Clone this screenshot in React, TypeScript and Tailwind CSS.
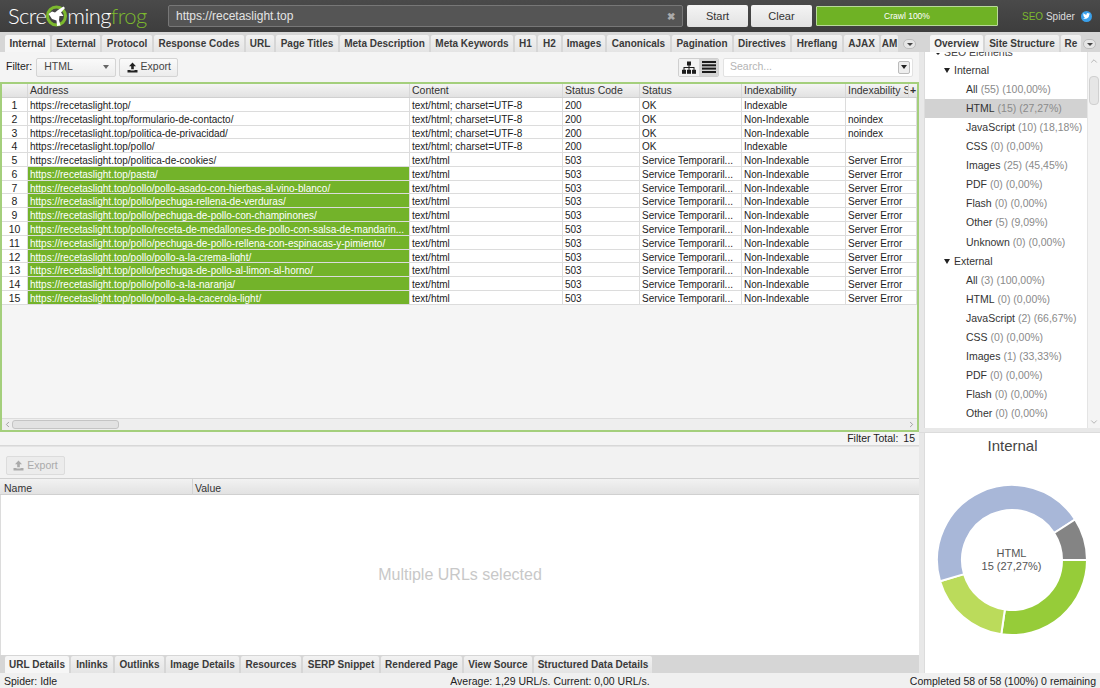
import { ChevronDown, ChevronLeft, ChevronRight, ChevronUp } from 'lucide-react';

const font = 'font-["Liberation_Sans",Arial,sans-serif]';

const topTabs = [
  { name: 'Internal', w: 'w-[45px]', active: true },
  { name: 'External', w: 'w-[48px]' },
  { name: 'Protocol', w: 'w-[50px]' },
  { name: 'Response Codes', w: 'w-[90px]' },
  { name: 'URL', w: 'w-[28px]' },
  { name: 'Page Titles', w: 'w-[62px]' },
  { name: 'Meta Description', w: 'w-[89px]' },
  { name: 'Meta Keywords', w: 'w-[82px]' },
  { name: 'H1', w: 'w-[21px]' },
  { name: 'H2', w: 'w-[23px]' },
  { name: 'Images', w: 'w-[42px]' },
  { name: 'Canonicals', w: 'w-[63px]' },
  { name: 'Pagination', w: 'w-[60px]' },
  { name: 'Directives', w: 'w-[56px]' },
  { name: 'Hreflang', w: 'w-[50px]' },
  { name: 'AJAX', w: 'w-[35px]' },
];

const bottomTabs = [
  { name: 'URL Details', w: 'w-[64px]', active: true },
  { name: 'Inlinks', w: 'w-[42px]' },
  { name: 'Outlinks', w: 'w-[49px]' },
  { name: 'Image Details', w: 'w-[73px]' },
  { name: 'Resources', w: 'w-[60px]' },
  { name: 'SERP Snippet', w: 'w-[76px]' },
  { name: 'Rendered Page', w: 'w-[81px]' },
  { name: 'View Source', w: 'w-[68px]' },
  { name: 'Structured Data Details', w: 'w-[118px]' },
];

const rows = [
  ['https://recetaslight.top/', 'text/html; charset=UTF-8', '200', 'OK', 'Indexable', ''],
  ['https://recetaslight.top/formulario-de-contacto/', 'text/html; charset=UTF-8', '200', 'OK', 'Non-Indexable', 'noindex'],
  ['https://recetaslight.top/politica-de-privacidad/', 'text/html; charset=UTF-8', '200', 'OK', 'Non-Indexable', 'noindex'],
  ['https://recetaslight.top/pollo/', 'text/html; charset=UTF-8', '200', 'OK', 'Indexable', ''],
  ['https://recetaslight.top/politica-de-cookies/', 'text/html', '503', 'Service Temporaril...', 'Non-Indexable', 'Server Error'],
  ['https://recetaslight.top/pasta/', 'text/html', '503', 'Service Temporaril...', 'Non-Indexable', 'Server Error'],
  ['https://recetaslight.top/pollo/pollo-asado-con-hierbas-al-vino-blanco/', 'text/html', '503', 'Service Temporaril...', 'Non-Indexable', 'Server Error'],
  ['https://recetaslight.top/pollo/pechuga-rellena-de-verduras/', 'text/html', '503', 'Service Temporaril...', 'Non-Indexable', 'Server Error'],
  ['https://recetaslight.top/pollo/pechuga-de-pollo-con-champinones/', 'text/html', '503', 'Service Temporaril...', 'Non-Indexable', 'Server Error'],
  ['https://recetaslight.top/pollo/receta-de-medallones-de-pollo-con-salsa-de-mandarin...', 'text/html', '503', 'Service Temporaril...', 'Non-Indexable', 'Server Error'],
  ['https://recetaslight.top/pollo/pechuga-de-pollo-rellena-con-espinacas-y-pimiento/', 'text/html', '503', 'Service Temporaril...', 'Non-Indexable', 'Server Error'],
  ['https://recetaslight.top/pollo/pollo-a-la-crema-light/', 'text/html', '503', 'Service Temporaril...', 'Non-Indexable', 'Server Error'],
  ['https://recetaslight.top/pollo/pechuga-de-pollo-al-limon-al-horno/', 'text/html', '503', 'Service Temporaril...', 'Non-Indexable', 'Server Error'],
  ['https://recetaslight.top/pollo/pollo-a-la-naranja/', 'text/html', '503', 'Service Temporaril...', 'Non-Indexable', 'Server Error'],
  ['https://recetaslight.top/pollo/pollo-a-la-cacerola-light/', 'text/html', '503', 'Service Temporaril...', 'Non-Indexable', 'Server Error'],
];

const gridCols = 'grid grid-cols-[26px_382px_153px_77px_102px_104px_71px]';

const tree = [
  { group: 'Internal', items: [
    ['All', '(55) (100,00%)'], ['HTML', '(15) (27,27%)'], ['JavaScript', '(10) (18,18%)'], ['CSS', '(0) (0,00%)'],
    ['Images', '(25) (45,45%)'], ['PDF', '(0) (0,00%)'], ['Flash', '(0) (0,00%)'], ['Other', '(5) (9,09%)'], ['Unknown', '(0) (0,00%)'],
  ] },
  { group: 'External', items: [
    ['All', '(3) (100,00%)'], ['HTML', '(0) (0,00%)'], ['JavaScript', '(2) (66,67%)'], ['CSS', '(0) (0,00%)'],
    ['Images', '(1) (33,33%)'], ['PDF', '(0) (0,00%)'], ['Flash', '(0) (0,00%)'], ['Other', '(0) (0,00%)'],
  ] },
];

function Tab({ name, w, active }: { name: string; w: string; active?: boolean }) {
  return (
    <div className={`${w} shrink-0 mr-[2px] h-full flex items-center justify-center rounded-t-[2px] whitespace-nowrap overflow-hidden text-[10px] font-bold text-[#3a3a3a] ${active ? 'bg-[#f6f6f6]' : 'bg-gradient-to-b from-[#f2f2f2] to-[#e4e4e4]'}`}>
      {name}
    </div>
  );
}

function MoreButton() {
  return (
    <div className="w-[13px] h-[10px] rounded-full bg-[#e6e6e6] border border-[#bcbcbc] flex items-center justify-center">
      <div className="w-0 h-0 border-x-[3px] border-x-transparent border-t-[3px] border-t-[#444]" />
    </div>
  );
}

function ExportIcon({ color }: { color: string }) {
  return (
    <svg width="11" height="11" viewBox="0 0 11 11" fill={color}>
      <path d="M5.5 0.5 L9 4.2 H6.8 V7.2 H4.2 V4.2 H2 Z" />
      <path d="M0.5 8 H3.5 V8.6 H7.5 V8 H10.5 V10.5 H0.5 Z" />
    </svg>
  );
}

function TreeIcon() {
  return (
    <svg width="14" height="13" viewBox="0 0 14 13" fill="#1c1c1c">
      <rect x="5" y="0.5" width="4" height="4" />
      <path d="M6.5 4 H7.5 V6 H12.5 V9 H11.5 V7 H7.5 V9 H6.5 V7 H2.5 V9 H1.5 V6 H6.5 Z" />
      <rect x="0" y="8.8" width="4" height="4" />
      <rect x="5" y="8.8" width="4" height="4" />
      <rect x="10" y="8.8" width="4" height="4" />
    </svg>
  );
}

function ListIcon() {
  return (
    <svg width="14" height="12" viewBox="0 0 14 12" fill="#1c1c1c">
      <rect x="0" y="0" width="14" height="2" />
      <rect x="0" y="3.3" width="14" height="2" />
      <rect x="0" y="6.6" width="14" height="2" />
      <rect x="0" y="10" width="14" height="2" />
    </svg>
  );
}

function FrogMark() {
  return (
    <svg width="23" height="26" viewBox="0 0 23 26" className="shrink-0 mx-[-1px]">
      <circle cx="11.5" cy="13" r="9" fill="none" stroke="#7cb92e" strokeWidth="3" />
      <path d="M3.5 11 L7 8.5 L10 9.5 L13 7 L18.5 3.5 L20 5 L16 9.5 L18.5 13 L14.5 13 L14 17 L15.5 22.5 L12 23 L11.5 17.5 L7 16 L5 13 Z" fill="#ffffff" />
    </svg>
  );
}

function Donut() {
  const cx = 80;
  const cy = 80;
  const R = 75;
  const r = 50;
  const segs = [
    { from: 0, to: 98.2, fill: '#96cc39' },
    { from: 98.2, to: 163.6, fill: '#bbdb5b' },
    { from: 163.6, to: 327.3, fill: '#a8b7d8' },
    { from: 327.3, to: 360, fill: '#848484' },
  ];
  const pt = (rad: number, deg: number) => {
    const a = (deg * Math.PI) / 180;
    return `${(cx + rad * Math.cos(a)).toFixed(2)} ${(cy + rad * Math.sin(a)).toFixed(2)}`;
  };
  return (
    <svg width="160" height="160" viewBox="0 0 160 160" className="block">
      {segs.map((s) => (
        <path
          key={s.from}
          d={`M ${pt(R, s.from)} A ${R} ${R} 0 ${s.to - s.from > 180 ? 1 : 0} 1 ${pt(R, s.to)} L ${pt(r, s.to)} A ${r} ${r} 0 ${s.to - s.from > 180 ? 1 : 0} 0 ${pt(r, s.from)} Z`}
          fill={s.fill}
          stroke="#ffffff"
          strokeWidth="2"
        />
      ))}
    </svg>
  );
}

export default function App() {
  return (
    <div className={`${font} w-[1100px] h-[688px] overflow-hidden flex flex-col bg-[#ececec] text-[#1c1c1c] text-[10.5px]`}>
      {/* Top bar */}
      <header className="h-[32px] shrink-0 flex items-center bg-gradient-to-b from-[#4a4a4a] to-[#3d3d3d]">
        <div className="w-[168px] pl-[8px] flex items-center text-[22px] leading-none font-['Lato',sans-serif] font-light tracking-[-0.6px] text-white">
          Scre
          <FrogMark />
          ming<span className="text-[#7cb92e]">frog</span>
        </div>
        <div className="w-[515px] h-[22px] flex items-center justify-between px-[7px] rounded-[2px] border border-[#777] bg-[#555] text-[#e4e4e4] text-[12px]">
          <span>https://recetaslight.top</span>
          <span className="text-[#aaa] text-[10px] font-bold">✖</span>
        </div>
        <button className="ml-[4px] w-[61px] h-[22px] rounded-[2px] bg-gradient-to-b from-[#f4f4f4] to-[#e2e2e2] text-[#333] text-[11px]">Start</button>
        <button className="ml-[3px] w-[61px] h-[22px] rounded-[2px] bg-gradient-to-b from-[#f4f4f4] to-[#e2e2e2] text-[#333] text-[11px]">Clear</button>
        <div className="ml-[4px] w-[182px] h-[20px] flex items-center justify-center rounded-[1px] border border-[#b9d99a] bg-[#6fb225] text-white text-[8.5px]">Crawl 100%</div>
        <div className="ml-[24px] text-[10px] whitespace-nowrap">
          <span className="text-[#7cb92e]">SEO</span> <span className="text-[#ddd]">Spider</span>
        </div>
        <div className="ml-[6px] w-[11px] h-[11px] rounded-full bg-[#3aa0ea] flex items-center justify-center">
          <svg width="7" height="6" viewBox="0 0 24 20" fill="#fff"><path d="M24 2.4a9.8 9.8 0 0 1-2.8.8A4.9 4.9 0 0 0 23.3.5a9.8 9.8 0 0 1-3.1 1.2 4.9 4.9 0 0 0-8.4 4.5A14 14 0 0 1 1.7.9a4.9 4.9 0 0 0 1.5 6.6 4.9 4.9 0 0 1-2.2-.6 4.9 4.9 0 0 0 3.9 4.9 4.9 4.9 0 0 1-2.2.1 4.9 4.9 0 0 0 4.6 3.4A9.9 9.9 0 0 1 0 17.3 14 14 0 0 0 21.5 5a10 10 0 0 0 2.5-2.6z" /></svg>
        </div>
      </header>

      <div className="flex-1 min-h-0 flex">
        {/* Left column */}
        <div className="w-[919px] shrink-0 flex flex-col">
          <div className="h-[20px] shrink-0 flex items-end pl-[5px] bg-[#d6d6d6]">
            <div className="h-[17px] flex">
              {topTabs.map((t) => <Tab key={t.name} {...t} />)}
              <Tab name="AM" w="w-[17px]" />
            </div>
            <div className="ml-[3px] mb-[3px]"><MoreButton /></div>
          </div>

          <div className="h-[30px] shrink-0 flex items-center pl-[6px] pr-[6px] bg-[#f4f4f4]">
            <span className="text-[10.5px] mr-[4px]">Filter:</span>
            <div className="w-[80px] h-[19px] flex items-center justify-between pl-[7px] pr-[6px] rounded-[2px] border border-[#d4d4d4] bg-gradient-to-b from-[#fafafa] to-[#ececec] text-[#444]">
              HTML
              <div className="w-0 h-0 border-x-[3.5px] border-x-transparent border-t-[4px] border-t-[#666]" />
            </div>
            <div className="ml-[3px] w-[59px] h-[19px] flex items-center justify-center gap-[3px] rounded-[2px] border border-[#d4d4d4] bg-gradient-to-b from-[#fafafa] to-[#ececec] text-[#444]">
              <ExportIcon color="#222" />
              Export
            </div>
            <div className="ml-auto flex h-[19px] rounded-[2px] border border-[#cfcfcf] overflow-hidden">
              <div className="w-[20px] flex items-center justify-center bg-[#f2f2f2]"><TreeIcon /></div>
              <div className="w-[19px] flex items-center justify-center bg-[#d6d6d6]"><ListIcon /></div>
            </div>
            <div className="ml-[4px] w-[190px] h-[19px] flex items-center justify-between pl-[6px] pr-[2px] rounded-[2px] bg-white border border-[#e2e2e2] text-[#b4b4b4]">
              Search...
              <div className="w-[12px] h-[13px] flex items-center justify-center rounded-[2px] bg-[#eee] border border-[#bbb]">
                <div className="w-0 h-0 border-x-[3px] border-x-transparent border-t-[4px] border-t-[#222]" />
              </div>
            </div>
          </div>

          {/* Main table */}
          <div className="h-[350px] shrink-0 flex flex-col border-x-2 border-y-2 border-[#a4cf7c] bg-[#f5f5f5]">
            <div className={`${gridCols} h-[14px] shrink-0 bg-gradient-to-b from-[#f4f4f4] to-[#e2e2e2] border-b border-[#d0d0d0] overflow-hidden`}>
              <div className="border-r border-[#d8d8d8]" />
              {['Address', 'Content', 'Status Code', 'Status', 'Indexability'].map((h) => (
                <div key={h} className="pl-[2px] leading-[12px] border-r border-[#d8d8d8] text-[#333]">{h}</div>
              ))}
              <div className="pl-[2px] leading-[12px] whitespace-nowrap overflow-hidden flex justify-between text-[#333]">
                <span className="w-[60px] overflow-hidden">Indexability S</span>
                <span className="w-[9px] border-l border-[#d8d8d8] text-center font-bold">+</span>
              </div>
            </div>
            <div className="shrink-0 bg-white text-[10px]">
              {rows.map((row, i) => (
                <div key={row[0]} className={`${gridCols} h-[13.79px] leading-[15.5px] border-b border-[#dcdcdc] overflow-hidden whitespace-nowrap`}>
                  <div className="text-center text-[10.5px] border-r border-[#dcdcdc]">{i + 1}</div>
                  <div className={`pl-[2px] border-r border-[#dcdcdc] overflow-hidden ${i >= 5 ? 'bg-[#73b32a] text-white' : ''}`}>{row[0]}</div>
                  {row.slice(1).map((c, j) => (
                    <div key={j} className="pl-[2px] border-r border-[#dcdcdc] overflow-hidden">{c}</div>
                  ))}
                </div>
              ))}
            </div>
            <div className="flex-1" />
            <div className="h-[12px] shrink-0 flex items-center justify-between px-[1px] bg-[#eeeeee] border-t border-[#dcdcdc] text-[#888]">
              <ChevronLeft size={9} />
              <div className="mr-auto w-[107px] h-[9px] rounded-[3px] bg-[#e2e2e2] border border-[#c4c4c4]" />
              <ChevronRight size={9} />
            </div>
          </div>
          <div className="h-[14px] shrink-0 flex items-center justify-end pr-[4px] border-b border-[#d8d8d8] bg-[#f4f4f4] text-[#222]">
            Filter Total:<span className="ml-[5px]">15</span>
          </div>
          <div className="h-[32px] shrink-0 pt-[9px] pl-[6px] border-t border-[#e4e4e4] bg-[#f2f2f2]">
            <div className="w-[59px] h-[19px] flex items-center justify-center gap-[3px] rounded-[2px] border border-[#dcdcdc] bg-[#ececec] text-[#aaa]">
              <ExportIcon color="#aaa" />
              Export
            </div>
          </div>
          <div className="h-[17px] shrink-0 grid grid-cols-[193px_1fr] bg-gradient-to-b from-[#f2f2f2] to-[#e2e2e2] border-y border-[#d0d0d0] leading-[18px] text-[#333]">
            <div className="pl-[4px] border-r border-[#d4d4d4]">Name</div>
            <div className="pl-[2px]">Value</div>
          </div>
          <div className="flex-1 min-h-0 flex items-center justify-center bg-white border-l border-[#dcdcdc] text-[#c8c8c8] text-[16px]">
            Multiple URLs selected
          </div>
          <div className="h-[18px] shrink-0 flex pl-[5px] bg-[#d6d6d6]">
            <div className="h-[17px] mt-[1px] flex">
              {bottomTabs.map((t) => <Tab key={t.name} {...t} />)}
            </div>
          </div>
        </div>

        {/* Right column */}
        <div className="flex-1 min-w-0 flex flex-col bg-[#e8e8e8]">
          <div className="h-[20px] shrink-0 flex items-end pl-[11px] bg-[#d6d6d6]">
            <div className="h-[17px] flex">
              <Tab name="Overview" w="w-[53px]" active />
              <Tab name="Site Structure" w="w-[74px]" />
              <Tab name="Re" w="w-[20px]" />
            </div>
            <div className="mb-[3px]"><MoreButton /></div>
          </div>
          <div className="h-[376px] shrink-0 ml-[5px] flex bg-white border-l border-[#dcdcdc] overflow-hidden">
            <div className="flex-1 min-w-0 overflow-hidden">
              <div className="h-[9px] overflow-hidden flex items-start pl-[11px] gap-[4px] text-[#444]">
                <div className="mt-[1px] w-0 h-0 border-x-[2px] border-x-transparent border-t-[2px] border-t-[#222]" />
                <span className="leading-[0px]">SEO Elements</span>
              </div>
              {tree.map((g) => (
                <div key={g.group}>
                  <div className="h-[19.1px] flex items-center pl-[19px] gap-[4px] text-[#333]">
                    <div className="w-0 h-0 border-x-[3.5px] border-x-transparent border-t-[5px] border-t-[#222]" />
                    {g.group}
                  </div>
                  {g.items.map(([label, val]) => (
                    <div key={label} className={`h-[19.1px] flex items-center pl-[41px] gap-[3px] ${label === 'HTML' && g.group === 'Internal' ? 'bg-[#d2d2d2]' : ''}`}>
                      <span className="text-[#333]">{label}</span>
                      <span className="text-[#8a8a8a]">{val}</span>
                    </div>
                  ))}
                </div>
              ))}
            </div>
            <div className="w-[13px] shrink-0 flex flex-col items-center bg-[#f4f4f4] border-l border-[#e4e4e4] text-[#aaa]">
              <ChevronUp size={10} className="mt-[4px]" />
              <div className="mt-[10px] w-[10px] h-[29px] rounded-[4px] bg-[#e6e6e6] border border-[#d0d0d0]" />
              <ChevronDown size={10} className="mt-auto mb-[1px]" />
            </div>
          </div>
          <div className="h-[5px] shrink-0 border-b border-[#dcdcdc]" />
          <div className="flex-1 min-h-0 ml-[5px] flex flex-col items-center bg-white border-l border-[#dcdcdc]">
            <div className="mt-[5px] text-[15px] leading-[16px] text-[#444]">Internal</div>
            <div className="relative mt-[26px] mr-[2px]">
              <Donut />
              <div className="absolute inset-0 flex flex-col items-center justify-center text-[11px] leading-[13px] text-[#555]">
                <span>HTML</span>
                <span>15 (27,27%)</span>
              </div>
            </div>
          </div>
        </div>
      </div>

      {/* Status bar */}
      <footer className="h-[15px] shrink-0 grid grid-cols-3 items-center px-[4px] pt-[1px] bg-[#f0f0f0] text-[#222] whitespace-nowrap">
        <span>Spider: Idle</span>
        <span className="text-center">Average: 1,29 URL/s. Current: 0,00 URL/s.</span>
        <span className="text-right">Completed 58 of 58 (100%) 0 remaining</span>
      </footer>
    </div>
  );
}
